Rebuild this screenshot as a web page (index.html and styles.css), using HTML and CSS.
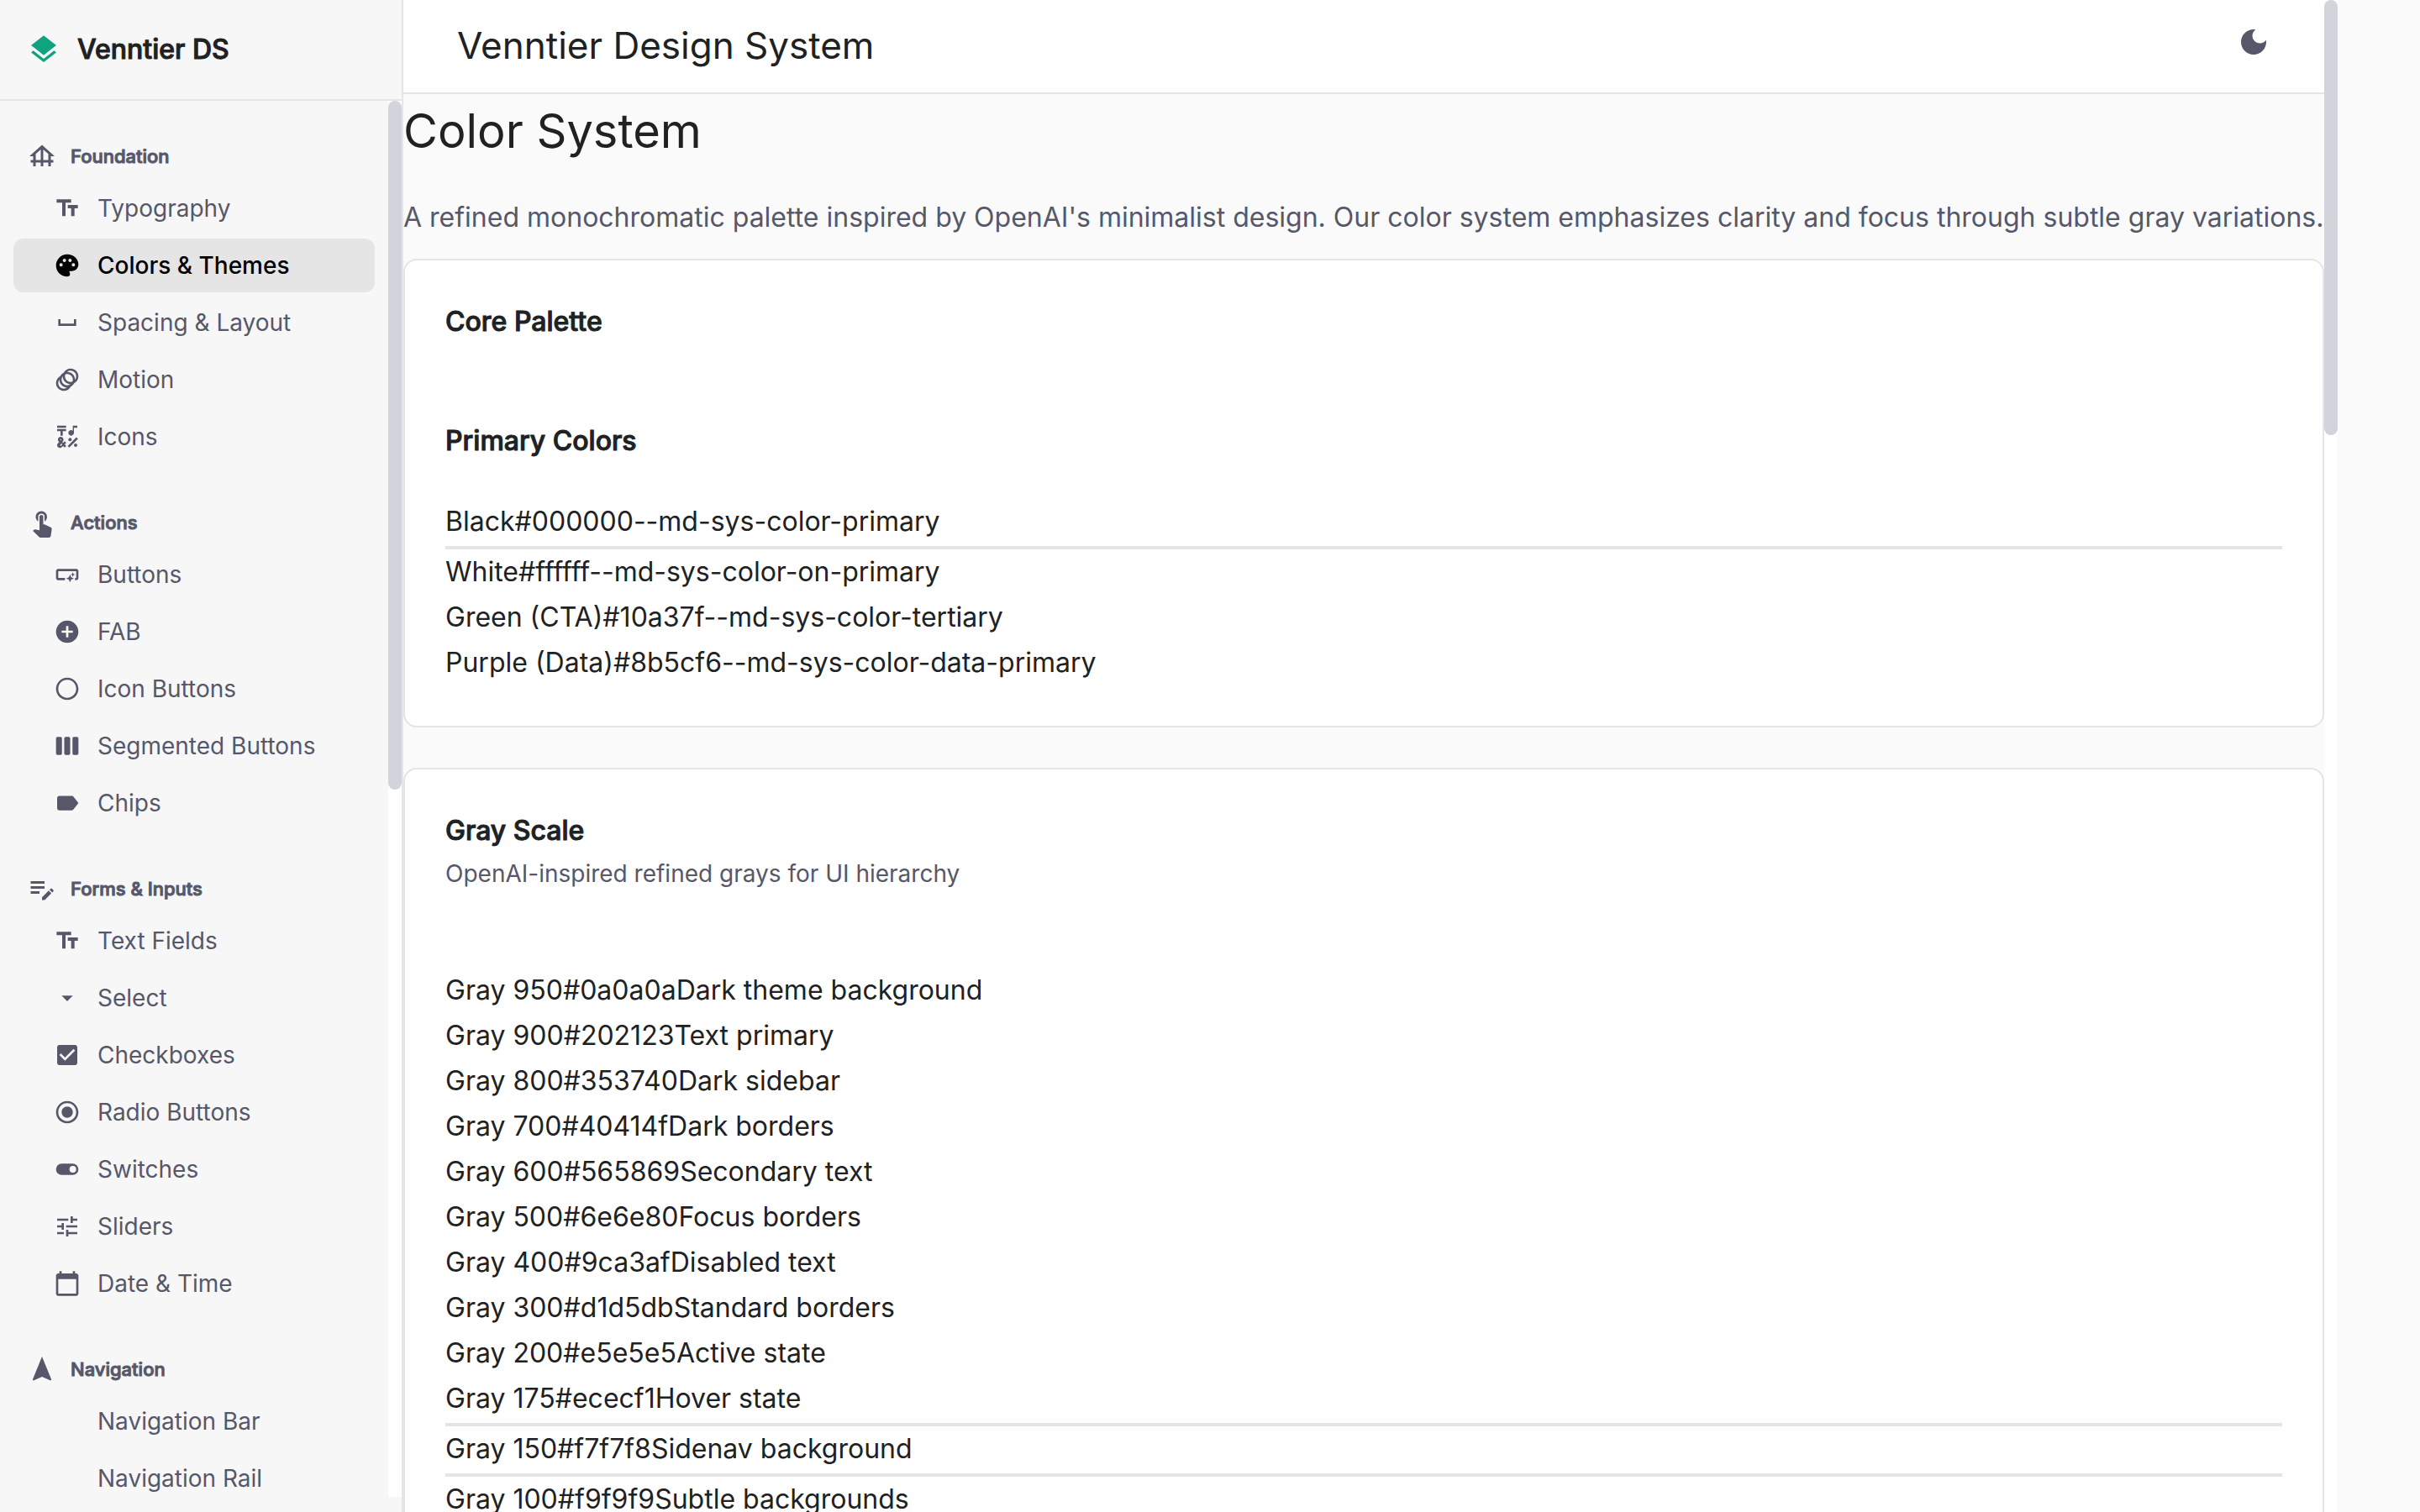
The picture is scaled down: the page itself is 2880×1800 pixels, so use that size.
FILE: index.html
```html
<!DOCTYPE html>
<html lang="en">
<head>
<meta charset="utf-8">
<title>Venntier Design System</title>
<link rel="stylesheet" href="styles.css">
</head>
<body>
<div class="app">
  <aside class="sidebar">
    <div class="brand">
      <svg class="icon icon-lg" viewBox="0 0 24 24" aria-hidden="true"><path d="M11.99 18.54l-7.37-5.73L3 14.07l9 7 9-7-1.63-1.27-7.38 5.74zM12 16l7.36-5.73L21 9l-9-7-9 7 1.63 1.27L12 16z"/></svg>
      <span class="brand-name">Venntier DS</span>
    </div>
    <div class="scroll-area">
      <nav class="nav" aria-label="Components">
        <section class="group">
          <h2 class="group-title"><svg class="icon icon-md" viewBox="0 0 24 24" aria-hidden="true"><path d="M19 12h3L12 3 2 12h3v3H3v2h2v3h2v-3h4v3h2v-3h4v3h2v-3h2v-2h-2v-3zM7 15v-4.81l4-3.6V15H7zm6 0V6.59l4 3.6V15h-4z"/></svg>Foundation</h2>
          <a class="item" href="#typography"><svg class="icon" viewBox="0 0 24 24" aria-hidden="true"><path d="M2.5 4v3h5v12h3V7h5V4h-13zm19 5h-9v3h3v7h3v-7h3V9z"/></svg>Typography</a>
          <a class="item active" href="#colors" aria-current="page"><svg class="icon" viewBox="0 0 24 24" aria-hidden="true"><path fill-rule="evenodd" d="M12 2C6.49 2 2 6.49 2 12s4.49 10 10 10a2.5 2.5 0 0 0 2.5-2.5c0-.61-.23-1.2-.64-1.67a.53.53 0 0 1-.13-.33c0-.28.22-.5.5-.5H16c3.31 0 6-2.69 6-6 0-4.96-4.49-9-10-9zM6.5 13a1.5 1.5 0 1 1 0-3 1.5 1.5 0 0 1 0 3zm3-4a1.5 1.5 0 1 1 0-3 1.5 1.5 0 0 1 0 3zm5 0a1.5 1.5 0 1 1 0-3 1.5 1.5 0 0 1 0 3zm3 4a1.5 1.5 0 1 1 0-3 1.5 1.5 0 0 1 0 3z"/></svg>Colors &amp; Themes</a>
          <a class="item" href="#spacing"><svg class="icon" viewBox="0 0 24 24" aria-hidden="true"><path d="M18 9v4H6V9H4v6h16V9z"/></svg>Spacing &amp; Layout</a>
          <a class="item" href="#motion"><svg class="icon" viewBox="0 0 24 24" aria-hidden="true"><path d="M15 2c-2.71 0-5.05 1.54-6.22 3.78-1.28.67-2.34 1.72-3 3C3.54 9.95 2 12.29 2 15c0 3.87 3.13 7 7 7 2.71 0 5.05-1.54 6.22-3.78 1.28-.67 2.34-1.72 3-3C20.46 14.05 22 11.71 22 9c0-3.87-3.13-7-7-7zM9 20c-2.76 0-5-2.24-5-5 0-1.12.37-2.16 1-3 0 3.87 3.13 7 7 7-.84.63-1.88 1-3 1zm3-3c-2.76 0-5-2.24-5-5 0-1.12.37-2.16 1-3 0 3.86 3.13 6.99 7 7-.84.63-1.88 1-3 1zm4.7-3.3c-.53.19-1.1.3-1.7.3-2.76 0-5-2.24-5-5 0-.6.11-1.17.3-1.7.53-.19 1.1-.3 1.7-.3 2.76 0 5 2.24 5 5 0 .6-.11 1.17-.3 1.7zM19 12c0-3.86-3.13-6.99-7-7 .84-.63 1.87-1 3-1 2.76 0 5 2.24 5 5 0 1.12-.37 2.16-1 3z"/></svg>Motion</a>
          <a class="item" href="#icons"><svg class="icon" viewBox="0 0 24 24" aria-hidden="true"><path d="M3 2h8v2H3zM6 11h2V7h3V5H3v2h3zM12.4 20.18l7.78-7.78 1.41 1.42-7.77 7.77z"/><circle cx="14.5" cy="14.5" r="1.5"/><circle cx="19.5" cy="19.5" r="1.5"/><path d="M15.5 11c1.38 0 2.5-1.12 2.5-2.5V4h3V2h-4v4.51c-.42-.32-.93-.51-1.5-.51C14.12 6 13 7.12 13 8.5s1.12 2.5 2.5 2.5zM9.74 15.96l-1.41 1.41-.71-.71.35-.35c.98-.98.98-2.56 0-3.54-.49-.49-1.13-.73-1.77-.73-.64 0-1.28.24-1.77.73-.98.98-.98 2.56 0 3.54l.35.35-1.06 1.06c-.98.98-.98 2.56 0 3.54.49.5 1.13.74 1.77.74s1.28-.24 1.77-.73l1.06-1.06 1.41 1.41 1.41-1.41-1.41-1.41 1.41-1.41-1.4-1.43zm-3.89-1.77c.12-.12.26-.14.35-.14.09 0 .23.02.35.14.19.2.19.51 0 .71l-.35.35-.35-.35c-.19-.2-.19-.51 0-.71zm.7 5.66c-.12.13-.26.15-.35.15s-.23-.02-.35-.15c-.19-.2-.19-.51 0-.71l1.06-1.06.71.71-1.07 1.06z"/></svg>Icons</a>
        </section>
        <section class="group">
          <h2 class="group-title"><svg class="icon icon-md" viewBox="0 0 24 24" aria-hidden="true"><path d="M9 11.24V7.5a2.5 2.5 0 0 1 5 0v3.74c1.21-.81 2-2.18 2-3.74C16 5.01 13.99 3 11.5 3S7 5.01 7 7.5c0 1.56.79 2.93 2 3.74zm9.84 4.63l-4.54-2.26c-.17-.07-.35-.11-.54-.11H13v-6c0-.83-.67-1.5-1.5-1.5S10 6.67 10 7.5v10.74l-3.43-.72c-.08-.01-.15-.03-.24-.03-.31 0-.59.13-.79.33l-.79.8 4.94 4.94c.27.27.65.44 1.06.44h6.79c.75 0 1.33-.55 1.44-1.28l.75-5.27c.01-.07.02-.14.02-.2 0-.62-.38-1.16-.91-1.38z"/></svg>Actions</h2>
          <a class="item" href="#buttons"><svg class="icon" viewBox="0 0 24 24" aria-hidden="true"><path d="M22 9v6c0 1.1-.9 2-2 2h-1v-2h1V9H4v6h6v2H4c-1.1 0-2-.9-2-2V9c0-1.1.9-2 2-2h16c1.1 0 2 .9 2 2zm-7.5 10l1.09-2.41L18 15.5l-2.41-1.09L14.5 12l-1.09 2.41L11 15.5l2.41 1.09L14.5 19zm2.5-5l.62-1.38L19 12l-1.38-.62L17 10l-.62 1.38L15 12l1.38.62L17 14z"/></svg>Buttons</a>
          <a class="item" href="#fab"><svg class="icon" viewBox="0 0 24 24" aria-hidden="true"><path d="M12 2C6.48 2 2 6.48 2 12s4.48 10 10 10 10-4.48 10-10S17.52 2 12 2zm5 11h-4v4h-2v-4H7v-2h4V7h2v4h4v2z"/></svg>FAB</a>
          <a class="item" href="#icon-buttons"><svg class="icon" viewBox="0 0 24 24" aria-hidden="true"><path d="M12 2C6.48 2 2 6.48 2 12s4.48 10 10 10 10-4.48 10-10S17.52 2 12 2zm0 18c-4.42 0-8-3.58-8-8s3.58-8 8-8 8 3.58 8 8-3.58 8-8 8z"/></svg>Icon Buttons</a>
          <a class="item" href="#segmented"><svg class="icon" viewBox="0 0 24 24" aria-hidden="true"><rect x="2" y="4" width="5.3" height="16" rx="1.3"/><rect x="9.35" y="4" width="5.3" height="16" rx="1.3"/><rect x="16.7" y="4" width="5.3" height="16" rx="1.3"/></svg>Segmented Buttons</a>
          <a class="item" href="#chips"><svg class="icon" viewBox="0 0 24 24" aria-hidden="true"><path d="M17.63 5.84C17.27 5.33 16.67 5 16 5L5 5.01C3.9 5.01 3 5.9 3 7v10c0 1.1.9 1.99 2 1.99L16 19c.67 0 1.27-.33 1.63-.84L22 12l-4.37-6.16z" transform="translate(0 1) scale(1 .92)"/></svg>Chips</a>
        </section>
        <section class="group">
          <h2 class="group-title"><svg class="icon icon-md" viewBox="0 0 24 24" aria-hidden="true"><path d="M3 10h11v2H3v-2zm0-2h11V6H3v2zm0 8h7v-2H3v2zm15.01-3.13l.71-.71c.39-.39 1.02-.39 1.41 0l.71.71c.39.39.39 1.02 0 1.41l-.71.71-2.12-2.12zm-.71.71l-5.3 5.3V21h2.12l5.3-5.3-2.12-2.12z"/></svg>Forms &amp; Inputs</h2>
          <a class="item" href="#text-fields"><svg class="icon" viewBox="0 0 24 24" aria-hidden="true"><path d="M2.5 4v3h5v12h3V7h5V4h-13zm19 5h-9v3h3v7h3v-7h3V9z"/></svg>Text Fields</a>
          <a class="item" href="#select"><svg class="icon" viewBox="0 0 24 24" aria-hidden="true"><path d="M7 10l5 5 5-5z"/></svg>Select</a>
          <a class="item" href="#checkboxes"><svg class="icon" viewBox="0 0 24 24" aria-hidden="true"><path d="M19 3H5c-1.11 0-2 .9-2 2v14c0 1.1.89 2 2 2h14c1.11 0 2-.9 2-2V5c0-1.1-.89-2-2-2zm-9 14l-5-5 1.41-1.41L10 14.17l7.59-7.59L19 8l-9 9z"/></svg>Checkboxes</a>
          <a class="item" href="#radio"><svg class="icon" viewBox="0 0 24 24" aria-hidden="true"><path d="M12 7c-2.76 0-5 2.24-5 5s2.24 5 5 5 5-2.24 5-5-2.24-5-5-5zm0-5C6.48 2 2 6.48 2 12s4.48 10 10 10 10-4.48 10-10S17.52 2 12 2zm0 18c-4.42 0-8-3.58-8-8s3.58-8 8-8 8 3.58 8 8-3.58 8-8 8z"/></svg>Radio Buttons</a>
          <a class="item" href="#switches"><svg class="icon" viewBox="0 0 24 24" aria-hidden="true"><path fill-rule="evenodd" d="M7 7h10a5 5 0 0 1 0 10H7A5 5 0 0 1 7 7zm10 2a3 3 0 1 0 0 6 3 3 0 0 0 0-6z"/></svg>Switches</a>
          <a class="item" href="#sliders"><svg class="icon" viewBox="0 0 24 24" aria-hidden="true"><path d="M3 17v2h6v-2H3zM3 5v2h10V5H3zm10 16v-2h8v-2h-8v-2h-2v6h2zM7 9v2H3v2h4v2h2V9H7zm14 4v-2H11v2h10zm-6-4h2V7h4V5h-4V3h-2v6z"/></svg>Sliders</a>
          <a class="item" href="#date-time"><svg class="icon" viewBox="0 0 24 24" aria-hidden="true"><path d="M20 3h-1V1h-2v2H7V1H5v2H4c-1.1 0-2 .9-2 2v16c0 1.1.9 2 2 2h16c1.1 0 2-.9 2-2V5c0-1.1-.9-2-2-2zm0 18H4V8h16v13z"/></svg>Date &amp; Time</a>
        </section>
        <section class="group">
          <h2 class="group-title"><svg class="icon icon-md" viewBox="0 0 24 24" aria-hidden="true"><path d="M12 2L4.5 20.29l.71.71L12 18l6.79 3 .71-.71z"/></svg>Navigation</h2>
          <a class="item" href="#navigation-bar"><span class="icon"></span>Navigation Bar</a>
          <a class="item" href="#navigation-rail"><span class="icon"></span>Navigation Rail</a>
        </section>
      </nav>
      <div class="track"><div class="thumb thumb-nav"></div></div>
    </div>
  </aside>

  <div class="pane">
    <main class="main">
      <header class="topbar">
        <span class="topbar-title">Venntier Design System</span>
        <button class="theme-toggle" type="button" aria-label="Toggle dark theme"><svg class="icon icon-lg" viewBox="0 0 24 24" aria-hidden="true"><path d="M12 3c-4.97 0-9 4.03-9 9s4.03 9 9 9 9-4.03 9-9c0-.46-.04-.92-.1-1.36-.98 1.37-2.58 2.26-4.4 2.26-2.98 0-5.4-2.42-5.4-5.4 0-1.81.89-3.42 2.26-4.4-.44-.06-.9-.1-1.36-.1z"/></svg></button>
      </header>
      <h1 class="page-title">Color System</h1>
      <p class="lead">A refined monochromatic palette inspired by OpenAI's minimalist design. Our color system emphasizes clarity and focus through subtle gray variations.</p>

      <section class="card">
        <h2 class="card-title">Core Palette</h2>
        <h3 class="card-title subhead">Primary Colors</h3>
        <ul class="swatches">
          <li class="ruled"><span>Black</span><span>#000000</span><span>--md-sys-color-primary</span></li>
          <li><span>White</span><span>#ffffff</span><span>--md-sys-color-on-primary</span></li>
          <li><span>Green (CTA)</span><span>#10a37f</span><span>--md-sys-color-tertiary</span></li>
          <li><span>Purple (Data)</span><span>#8b5cf6</span><span>--md-sys-color-data-primary</span></li>
        </ul>
      </section>

      <section class="card">
        <h2 class="card-title">Gray Scale</h2>
        <p class="card-note">OpenAI-inspired refined grays for UI hierarchy</p>
        <ul class="swatches">
          <li><span>Gray 950</span><span>#0a0a0a</span><span>Dark theme background</span></li>
          <li><span>Gray 900</span><span>#202123</span><span>Text primary</span></li>
          <li><span>Gray 800</span><span>#353740</span><span>Dark sidebar</span></li>
          <li><span>Gray 700</span><span>#40414f</span><span>Dark borders</span></li>
          <li><span>Gray 600</span><span>#565869</span><span>Secondary text</span></li>
          <li><span>Gray 500</span><span>#6e6e80</span><span>Focus borders</span></li>
          <li><span>Gray 400</span><span>#9ca3af</span><span>Disabled text</span></li>
          <li><span>Gray 300</span><span>#d1d5db</span><span>Standard borders</span></li>
          <li><span>Gray 200</span><span>#e5e5e5</span><span>Active state</span></li>
          <li class="ruled"><span>Gray 175</span><span>#ececf1</span><span>Hover state</span></li>
          <li class="ruled"><span>Gray 150</span><span>#f7f7f8</span><span>Sidenav background</span></li>
          <li><span>Gray 100</span><span>#f9f9f9</span><span>Subtle backgrounds</span></li>
        </ul>
      </section>
    </main>
    <div class="track"><div class="thumb thumb-page"></div></div>
  </div>
</div>
</body>
</html>
```
FILE: styles.css
```css
:root {
  --text: #202123;
  --muted: #565869;
  --line: #e5e5e5;
  --thumb: #d1d5db;
}

* { box-sizing: border-box; }

body {
  margin: 0;
  background: #fafafa;
  color: var(--text);
  font-family: Inter, sans-serif;
  font-size: 32px;
  line-height: 54px;
}

h1, h2, h3, p, ul { margin: 0; padding: 0; }
ul { list-style: none; }

.app {
  display: flex;
  height: 100vh;
  padding-right: 98px;
  overflow: hidden;
}

.icon {
  flex: none;
  width: 32px;
  height: 32px;
  fill: currentColor;
}
.icon-md { width: 36px; height: 36px; }
.icon-lg { width: 40px; height: 40px; }

/* Headings are a medium face thickened by an outline */
.brand-name,
.group-title,
.card-title {
  font-weight: 500;
  -webkit-text-stroke: 1px currentColor;
}

/* Sidebar */
.sidebar {
  flex: none;
  display: flex;
  flex-direction: column;
  width: 480px;
  padding-bottom: 18px;
  border-right: 2px solid var(--line);
  background: #f7f7f8;
}

.brand {
  flex: none;
  display: flex;
  align-items: center;
  gap: 20px;
  height: 120px;
  padding-left: 32px;
  border-bottom: 2px solid var(--line);
  color: #10a37f;
}
.brand-name { color: var(--text); }

.scroll-area {
  flex: 1;
  display: flex;
  min-height: 0;
}

.nav {
  flex: 1;
  display: flex;
  flex-direction: column;
  gap: 40px;
  padding: 36px 16px 0;
  color: var(--muted);
}

.group-title {
  display: flex;
  align-items: center;
  gap: 16px;
  height: 60px;
  padding-left: 16px;
  font-size: 22px;
}
.group-title .icon { stroke: none; }

.item {
  display: flex;
  align-items: center;
  gap: 20px;
  height: 64px;
  padding-left: 48px;
  border-radius: 12px;
  color: inherit;
  font-size: 28px;
  text-decoration: none;
}
.item + .item { margin-top: 4px; }
.item.active {
  background: var(--line);
  color: #000;
  font-weight: 500;
}

/* Scroll tracks */
.track {
  flex: none;
  width: 16px;
  background: #fff;
}
.thumb {
  border-radius: 8px;
  background: var(--thumb);
}
.thumb-nav { height: 820px; }
.thumb-page { height: 518px; }

/* Page */
.pane {
  flex: 1;
  display: flex;
  min-width: 0;
}
.main {
  flex: 1;
  min-width: 0;
}

.topbar {
  display: flex;
  align-items: center;
  justify-content: space-between;
  height: 112px;
  padding: 0 64px 2px;
  border-bottom: 2px solid var(--line);
  background: #fff;
}
.topbar-title { font-size: 44px; }
.theme-toggle {
  display: flex;
  padding: 0;
  margin-bottom: 8px;
  border: 0;
  background: none;
  color: var(--muted);
}

.page-title {
  margin-bottom: 32px;
  font-size: 56px;
  font-weight: 400;
  line-height: 88px;
}
.lead {
  margin-bottom: 22px;
  color: var(--muted);
  white-space: nowrap;
}

.card {
  margin-bottom: 48px;
  padding: 48px;
  border: 2px solid var(--line);
  border-radius: 16px;
  background: #fff;
}
.card-title {
  font-size: 32px;
  line-height: 50px;
}
.subhead { margin: 92px 0 44px; }
.card-note {
  margin: 2px 0 88px;
  color: var(--muted);
  font-size: 28px;
  line-height: 48px;
}
.swatches .ruled {
  padding-bottom: 2px;
  border-bottom: 4px solid var(--line);
}
```
